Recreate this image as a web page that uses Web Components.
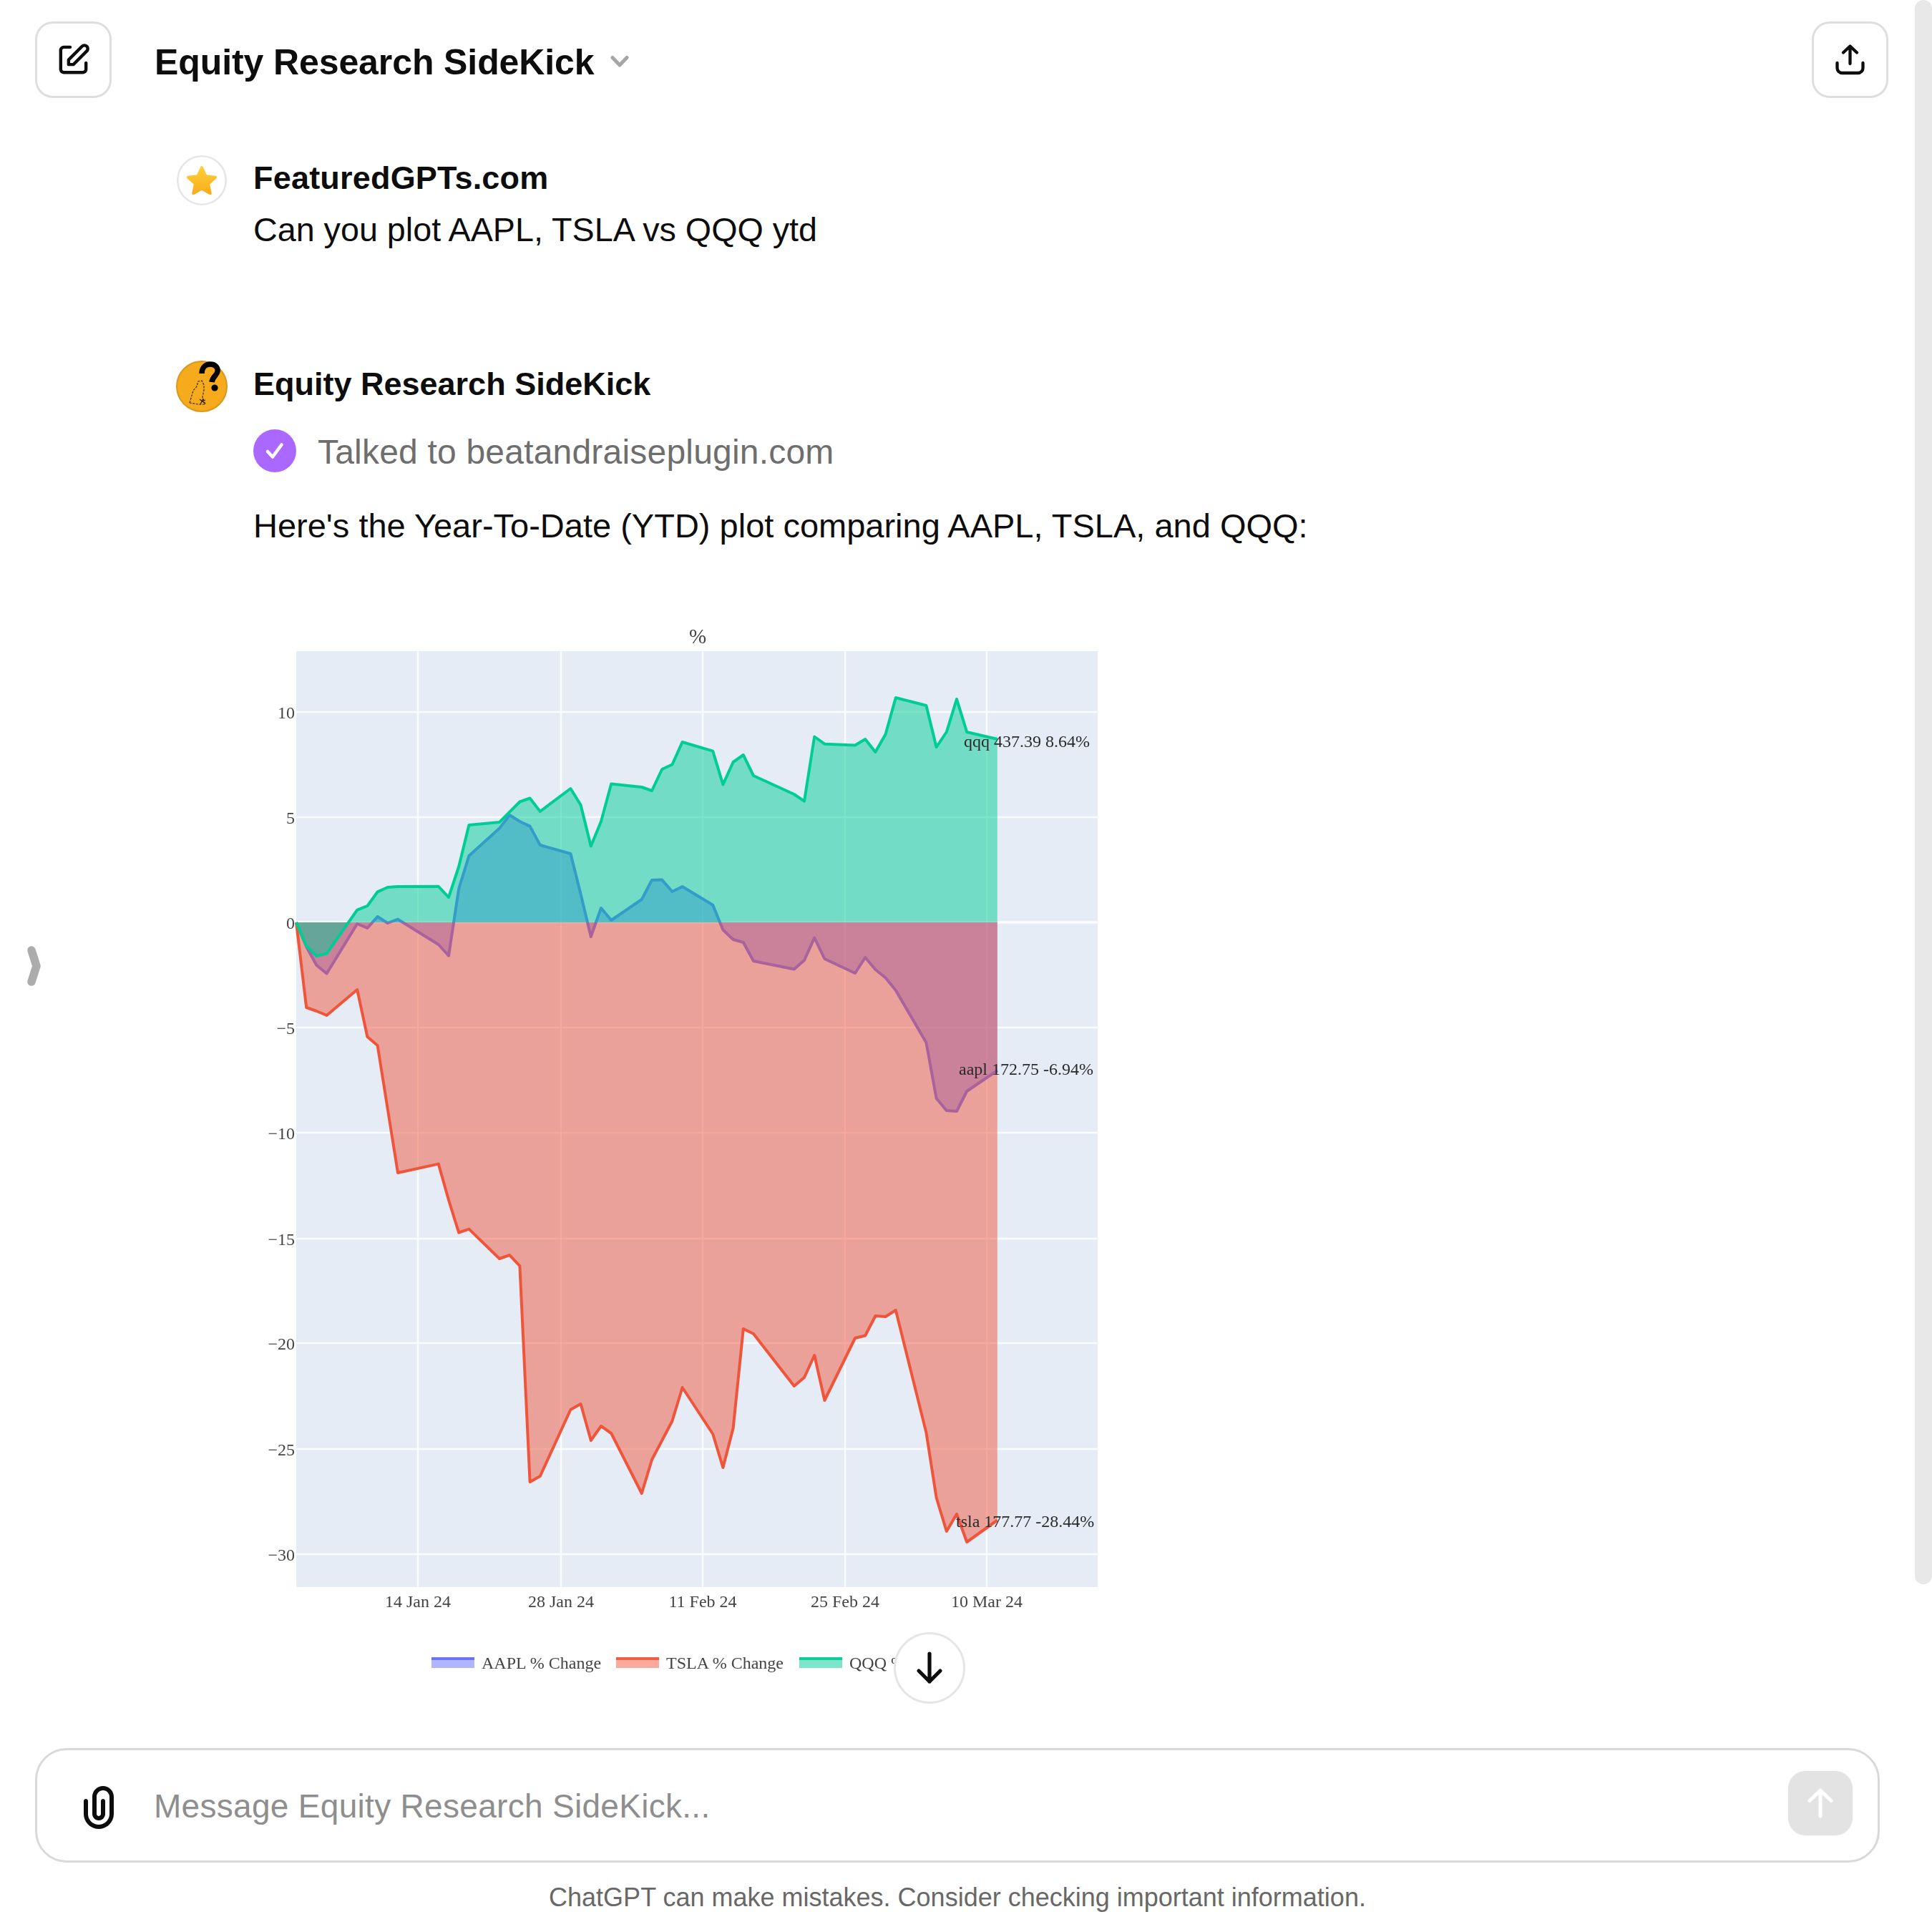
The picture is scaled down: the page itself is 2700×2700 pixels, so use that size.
<!DOCTYPE html>
<html lang="en">
<head>
<meta charset="utf-8">
<title>Equity Research SideKick</title>
<style>
  html, body { margin: 0; padding: 0; background: #fff; }
  body { font-family: "Liberation Sans", Arial, sans-serif; color: #0d0d0d; }
</style>
</head>
<body>
<chat-app>
  <chat-header slot="header" title-text="Equity Research SideKick"></chat-header>
  <chat-message name="FeaturedGPTs.com" avatar="star" gap="50" name-spacing=".2">
    <div style="font-size:46.7px;line-height:72px;margin-top:6px">Can you plot AAPL, TSLA vs QQQ ytd</div>
  </chat-message>
  <chat-message name="Equity Research SideKick" avatar="rabbit" gap="147" name-spacing="0">
    <tool-status>Talked to beatandraiseplugin.com</tool-status>
    <div style="font-size:47px;line-height:72px;margin-top:39px">Here's the Year-To-Date (YTD) plot comparing AAPL, TSLA, and QQQ:</div>
    <plot-chart></plot-chart>
  </chat-message>
  <scroll-down slot="overlay"></scroll-down>
  <sidebar-toggle slot="overlay"></sidebar-toggle>
  <page-scrollbar slot="overlay"></page-scrollbar>
  <message-composer slot="composer" placeholder="Message Equity Research SideKick..."></message-composer>
  <chat-footnote slot="composer">ChatGPT can make mistakes. Consider checking important information.</chat-footnote>
</chat-app>

<script>
const BORDER = '#dedede';

function shadow(el, html) {
  const root = el.attachShadow({ mode: 'open' });
  root.innerHTML = html;
  return root;
}

class ChatApp extends HTMLElement {
  constructor() {
    super();
    shadow(this, `
      <style>
        :host { display: flex; flex-direction: column; position: relative; width: 2700px; height: 2700px; overflow: hidden; background: #fff; }
        .list { flex: 1 1 auto; min-height: 0; overflow: hidden; display: flex; flex-direction: column; }
      </style>
      <slot name="header"></slot>
      <div class="list"><slot></slot></div>
      <slot name="composer"></slot>
      <slot name="overlay"></slot>`);
  }
}

class ChatHeader extends HTMLElement {
  connectedCallback() {
    if (this.shadowRoot) return;
    shadow(this, `
      <style>
        :host { display: flex; align-items: center; height: 107px; padding: 30px 61px 30px 49px; flex: none; }
        .title { margin-left: 60px; margin-top: 6px; font-size: 50px; line-height: 60px; font-weight: 700; letter-spacing: -.1px; white-space: nowrap; color: #0d0d0d; }
        .chev { margin-left: 22px; margin-top: 4px; display: block; }
        .spacer { flex: 1; }
      </style>
      <icon-button>
        <svg width="53" height="53" viewBox="0 0 24 24"><path fill="#0d0d0d" fill-rule="evenodd" d="M16.7929 2.79289C18.0118 1.57394 19.9882 1.57394 21.2071 2.79289C22.4261 4.01184 22.4261 5.98815 21.2071 7.20711L12.7071 15.7071C12.5196 15.8946 12.2652 16 12 16H9C8.44772 16 8 15.5523 8 15V12C8 11.7348 8.10536 11.4804 8.29289 11.2929L16.7929 2.79289ZM19.7929 4.20711C19.355 3.7692 18.645 3.7692 18.2071 4.2071L10 12.4142V14H11.5858L19.7929 5.79289C20.2308 5.35499 20.2308 4.64501 19.7929 4.20711ZM6 5C5.44772 5 5 5.44771 5 6V18C5 18.5523 5.44772 19 6 19H18C18.5523 19 19 18.5523 19 18V14C19 13.4477 19.4477 13 20 13C20.5523 13 21 13.4477 21 14V18C21 19.6569 19.6569 21 18 21H6C4.34315 21 3 19.6569 3 18V6C3 4.34314 4.34315 3 6 3H10C10.5523 3 11 3.44771 11 4C11 4.55228 10.5523 5 10 5H6Z"/></svg>
      </icon-button>
      <div class="title">${this.getAttribute('title-text')}</div>
      <svg class="chev" width="26" height="18" viewBox="0 0 26 18"><path d="M3 3.5L13 14L23 3.5" fill="none" stroke="#a6a6a6" stroke-width="5" stroke-linecap="round" stroke-linejoin="round"/></svg>
      <div class="spacer"></div>
      <icon-button>
        <svg width="53" height="53" viewBox="0 0 53 53" fill="none" stroke="#0d0d0d" stroke-width="4.3" stroke-linecap="round" stroke-linejoin="round"><path d="M26.5 8V32M17 16.5L26.5 7.5L36 16.5M8.5 31v7a7 7 0 0 0 7 7h22a7 7 0 0 0 7-7v-7"/></svg>
      </icon-button>`);
  }
}

class IconButton extends HTMLElement {
  constructor() {
    super();
    shadow(this, `
      <style>
        :host { display: flex; align-items: center; justify-content: center; box-sizing: border-box; width: 107px; height: 107px; border: 3px solid ${BORDER}; border-radius: 25px; background: #fff; flex: none; }
        ::slotted(svg) { display: block; }
      </style><slot></slot>`);
  }
}

class ChatAvatar extends HTMLElement {
  connectedCallback() {
    if (this.shadowRoot) return;
    const kind = this.getAttribute('kind');
    const star = `<svg width="70" height="70" viewBox="0 0 70 70">
        <defs><linearGradient id="g" x1="0" y1="0" x2="0" y2="1"><stop offset="0" stop-color="#ffcf3a"/><stop offset="1" stop-color="#fbad1c"/></linearGradient></defs>
        <circle cx="35" cy="35" r="33.7" fill="#fff" stroke="#e6e6e6" stroke-width="2.6"/>
        <polygon points="35,17 40.6,29.3 54,30.8 44,39.9 46.8,53.2 35,46.5 23.2,53.2 26,39.9 16,30.8 29.4,29.3" fill="url(#g)" stroke="url(#g)" stroke-width="4" stroke-linejoin="round"/>
      </svg>`;
    const rabbit = `<svg width="72" height="72" viewBox="0 0 72 72">
        <circle cx="36" cy="36" r="35" fill="#f5ab1c" stroke="#d9981e" stroke-width="2"/>
        <path d="M36 18C36 9 42 5 48 5C55 5 59 10 58 15C57 21 51 22 50 30" fill="none" stroke="#000" stroke-width="7.5"/>
        <circle cx="54" cy="38" r="4.6" fill="#000"/>
        <path d="M19 59L24 42L29 36L31 29L36 28L39 34L39 41L37 51L41 61L31 61L19 59" fill="none" stroke="#3a2708" stroke-width="1.2" stroke-dasharray="3 1.6"/>
        <path d="M33 54L41 60M38 53L34 61M36 57L41 55" fill="none" stroke="#2a1c05" stroke-width="1.2"/>
      </svg>`;
    shadow(this, `<style>:host{display:block;flex:none;width:${kind === 'star' ? 70 : 72}px;height:72px}svg{display:block}</style>${kind === 'star' ? star : rabbit}`);
  }
}

class ChatMessage extends HTMLElement {
  connectedCallback() {
    if (this.shadowRoot) return;
    const kind = this.getAttribute('avatar');
    const first = kind === 'star' ? 2 : 3;
    shadow(this, `
      <style>
        :host { display: flex; flex: none; margin-top: ${this.getAttribute('gap')}px; padding-left: ${kind === 'star' ? 247 : 246}px; }
        .body { margin-left: ${kind === 'star' ? 37 : 36}px; }
        .name { font-size: 45px; line-height: 60px; font-weight: 700; padding-top: ${first}px; color: #0d0d0d; white-space: nowrap; letter-spacing: ${this.getAttribute('name-spacing')}px; }
      </style>
      <chat-avatar kind="${kind}"></chat-avatar>
      <div class="body"><div class="name">${this.getAttribute('name')}</div><slot></slot></div>`);
  }
}

class ToolStatus extends HTMLElement {
  constructor() {
    super();
    shadow(this, `
      <style>
        :host { display: flex; align-items: center; margin-top: 33px; height: 60px; }
        svg { display: block; flex: none; }
        .t { margin-left: 30px; padding-top: 3px; font-size: 48px; line-height: 60px; color: #6e6e6e; letter-spacing: .2px; white-space: nowrap; }
      </style>
      <svg width="60" height="60" viewBox="0 0 60 60"><circle cx="30" cy="30" r="30" fill="#ab68ff"/><path d="M20 31L27 38.5L39.5 21.5" fill="none" stroke="#fff" stroke-width="4.6" stroke-linecap="round" stroke-linejoin="round"/></svg>
      <div class="t"><slot></slot></div>`);
  }
}

class PlotChart extends HTMLElement {
  constructor() {
    super();
    const days = [0,1,2,3,6,7,8,9,10,14,15,16,17,20,21,22,23,24,27,28,29,30,31,34,35,36,37,38,41,42,43,44,45,49,50,51,52,55,56,57,58,59,62,63,64,65,66,69];
    const qqq  = [1289,1322,1336,1332.5,1271.7,1266,1246.4,1240,1239,1238.8,1254,1211,1153,1149,1134.7,1120.5,1115.5,1134,1102,1125,1182.5,1148,1095.6,1100,1105,1075,1068.5,1037,1049.6,1096.4,1065,1055,1084,1110,1119.6,1029.5,1039.7,1041.5,1033,1051,1026,975,986,1044,1023,977,1023,1033];
    const aapl = [1289,1323,1349,1360.5,1291,1297,1281,1290,1284.7,1320,1335.6,1242,1196,1157.6,1139,1148,1154.6,1181,1193,1249.5,1309,1269,1286,1257,1230,1229.6,1246,1239,1264.7,1299.5,1313,1317,1343,1354.5,1342,1310.7,1340,1360,1338,1355,1366.5,1384,1457,1535,1552,1553,1525,1496];
    const tsla = [1289,1408,1413,1419,1383,1449,1461,1550,1639,1626.6,1677,1722.6,1717.6,1759,1754,1769,2071,2063,1970,1962,2013,1993,2003,2087,2040,2013,1986,1939,2004,2051,1996,1857,1864,1937,1925,1894,1957,1870,1866.5,1839,1840,1831,2002,2093,2140,2116,2155,2124.5];
    const X = d => (414 + 14.2 * d).toFixed(1);
    const ZERO = 1289;
    const trace = (ys, c, fill) => {
      const pts = ys.map((y, i) => X(days[i]) + ',' + y).join(' ');
      const last = X(days[days.length - 1]);
      return `<polygon points="${X(0)},${ZERO} ${pts} ${last},${ZERO}" fill="${fill}"/><polyline points="${pts}" fill="none" stroke="${c}" stroke-width="4" stroke-linejoin="round"/>`;
    };
    const yTicks = [[10,995],[5,1142],[0,1289],[-5,1436],[-10,1583],[-15,1731],[-20,1877],[-25,2025],[-30,2172]];
    const xTicks = [['14 Jan 24',584],['28 Jan 24',784],['11 Feb 24',982],['25 Feb 24',1181],['10 Mar 24',1379]];
    const hGrid = yTicks.map(([v, y]) => `<line x1="414" x2="1534" y1="${y}" y2="${y}" stroke="#fff" stroke-opacity=".85" stroke-width="${v === 0 ? 3.5 : 2.4}"/>`).join('');
    const vGrid = xTicks.map(([, x]) => `<line x1="${x}" x2="${x}" y1="910" y2="2218" stroke="#fff" stroke-opacity=".85" stroke-width="2.4"/>`).join('');
    const yLabels = yTicks.map(([v, y]) => `<text x="412" y="${y + 9}" text-anchor="end">${v < 0 ? '\u2212' + (-v) : v}</text>`).join('');
    const xLabels = xTicks.map(([t, x]) => `<text x="${x}" y="2246" text-anchor="middle">${t}</text>`).join('');
    const legend = [['AAPL % Change',603,'#636efa'],['TSLA % Change',861,'#ef553b'],['QQQ % Change',1117,'#00cc96']].map(([t, x, c]) =>
      `<rect x="${x}" y="2316" width="60" height="15" fill="${c}" fill-opacity=".5"/><rect x="${x}" y="2316" width="60" height="4" fill="${c}" fill-opacity=".9"/><text x="${x + 70}" y="2332">${t}</text>`).join('');
    shadow(this, `
      <style>
        :host { display: block; margin-top: 89px; width: 1200px; height: 1500px; }
        svg { display: block; filter: blur(.6px); }
        text { font-family: "Liberation Serif", "Times New Roman", serif; font-size: 24px; fill: #444; }
        .note text { fill: #2a2a2a; }
      </style>
      <svg width="1200" height="1500" viewBox="354 860 1200 1500">
        <rect x="414" y="910" width="1120" height="1308" fill="#e5ecf6"/>
        ${hGrid}${vGrid}
        ${trace(aapl, '#636efa', 'rgba(99,110,250,.5)')}
        ${trace(tsla, '#ef553b', 'rgba(239,85,59,.5)')}
        ${trace(qqq, '#00cc96', 'rgba(0,204,150,.5)')}
        <text x="975" y="899" text-anchor="middle" style="font-size:29px">%</text>
        ${yLabels}${xLabels}
        <g class="note">
          <text x="1347" y="1044">qqq 437.39 8.64%</text>
          <text x="1340" y="1502">aapl 172.75 -6.94%</text>
          <text x="1336" y="2134">tsla 177.77 -28.44%</text>
        </g>
        ${legend}
      </svg>`);
  }
}

class ScrollDown extends HTMLElement {
  constructor() {
    super();
    shadow(this, `
      <style>
        :host { position: absolute; left: 1249px; top: 2281px; box-sizing: border-box; width: 100px; height: 100px; border-radius: 50%; border: 3px solid #e5e5e5; background: #fff; display: flex; align-items: center; justify-content: center; }
      </style>
      <svg width="44" height="52" viewBox="0 0 44 52" fill="none" stroke="#0d0d0d" stroke-width="5.2" stroke-linecap="round" stroke-linejoin="round"><path d="M22 6V45M7 30L22 45L37 30"/></svg>`);
  }
}

class SidebarToggle extends HTMLElement {
  constructor() {
    super();
    shadow(this, `
      <style>:host { position: absolute; left: 30px; top: 1315px; width: 36px; height: 70px; display: block; } svg { display: block; }</style>
      <svg width="36" height="70" viewBox="0 0 36 70"><path d="M14 13L21 35L14 57" fill="none" stroke="#acacac" stroke-width="11.5" stroke-linecap="round" stroke-linejoin="round"/></svg>`);
  }
}

class PageScrollbar extends HTMLElement {
  constructor() {
    super();
    shadow(this, `<style>:host { position: absolute; right: 0; top: 0; width: 24px; height: 2214px; border-radius: 12px; background: #e8e8e8; display: block; }</style>`);
  }
}

class MessageComposer extends HTMLElement {
  connectedCallback() {
    if (this.shadowRoot) return;
    shadow(this, `
      <style>
        :host { display: flex; flex: none; align-items: center; box-sizing: border-box; height: 160px; margin-left: 49px; width: 2578px; padding: 0 35px 0 50px; border: 3px solid #d9d9d9; border-radius: 44px; background: #fff; }
        .clip { display: block; flex: none; margin-top: 6px; }
        .ph { flex: 1; margin-left: 41px; margin-top: 2px; font-size: 46px; line-height: 60px; color: #8e8e8e; letter-spacing: .3px; white-space: nowrap; }
        .send { flex: none; width: 90px; height: 90px; margin-top: -6px; border-radius: 24px; background: #e3e3e3; display: flex; align-items: center; justify-content: center; }
      </style>
      <svg class="clip" width="72" height="72" viewBox="0 0 24 24"><path fill="#0d0d0d" d="M9 7C9 4.23858 11.2386 2 14 2C16.7614 2 19 4.23858 19 7V15C19 18.866 15.866 22 12 22C8.13401 22 5 18.866 5 15V9C5 8.44772 5.44772 8 6 8C6.55228 8 7 8.44772 7 9V15C7 17.7614 9.23858 20 12 20C14.7614 20 17 17.7614 17 15V7C17 5.34315 15.6569 4 14 4C12.3431 4 11 5.34315 11 7V15C11 15.5523 11.4477 16 12 16C12.5523 16 13 15.5523 13 15V9C13 8.44772 13.4477 8 14 8C14.5523 8 15 8.44772 15 9V15C15 16.6569 13.6569 18 12 18C10.3431 18 9 16.6569 9 15V7Z"/></svg>
      <div class="ph">${this.getAttribute('placeholder')}</div>
      <div class="send"><svg width="44" height="50" viewBox="0 0 44 50" fill="none" stroke="#fff" stroke-width="5" stroke-linecap="round" stroke-linejoin="round"><path d="M22 7V43M7 21.5L22 7L37 21.5"/></svg></div>`);
  }
}

class ChatFootnote extends HTMLElement {
  constructor() {
    super();
    shadow(this, `
      <style>
        :host { display: block; flex: none; width: 2676px; height: 97px; box-sizing: border-box; padding-top: 25px; text-align: center; font-size: 36px; line-height: 48px; color: #686868; white-space: nowrap; }
      </style><slot></slot>`);
  }
}

customElements.define('icon-button', IconButton);
customElements.define('chat-avatar', ChatAvatar);
customElements.define('chat-header', ChatHeader);
customElements.define('tool-status', ToolStatus);
customElements.define('plot-chart', PlotChart);
customElements.define('chat-message', ChatMessage);
customElements.define('scroll-down', ScrollDown);
customElements.define('sidebar-toggle', SidebarToggle);
customElements.define('page-scrollbar', PageScrollbar);
customElements.define('message-composer', MessageComposer);
customElements.define('chat-footnote', ChatFootnote);
customElements.define('chat-app', ChatApp);
</script>
</body>
</html>
